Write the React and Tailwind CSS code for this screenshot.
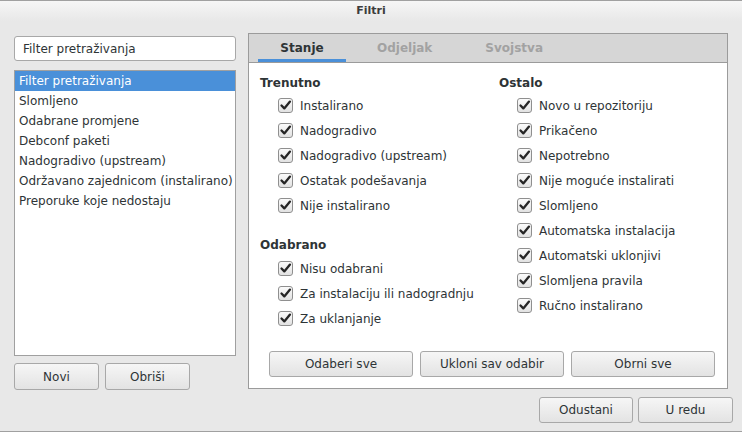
import React from "react";

const leftFilters = [
  "Filter pretraživanja",
  "Slomljeno",
  "Odabrane promjene",
  "Debconf paketi",
  "Nadogradivo (upstream)",
  "Održavano zajednicom (instalirano)",
  "Preporuke koje nedostaju",
];

const trenutno = ["Instalirano", "Nadogradivo", "Nadogradivo (upstream)", "Ostatak podešavanja", "Nije instalirano"];
const odabrano = ["Nisu odabrani", "Za instalaciju ili nadogradnju", "Za uklanjanje"];
const ostalo = [
  "Novo u repozitoriju",
  "Prikačeno",
  "Nepotrebno",
  "Nije moguće instalirati",
  "Slomljeno",
  "Automatska instalacija",
  "Automatski uklonjivi",
  "Slomljena pravila",
  "Ručno instalirano",
];

const Button = ({ children, className = "" }) => (
  <button
    className={`flex items-center justify-center rounded-[3px] border border-[#a8a8a8] bg-gradient-to-b from-[#f6f6f6] to-[#e3e3e3] text-[12px] text-[#2e3436] ${className}`}
  >
    {children}
  </button>
);

const Check = ({ label }) => (
  <div className="flex h-[25px] items-center whitespace-nowrap pl-[18px]">
    <div className="flex h-[15px] w-[15px] items-center justify-center rounded-[3px] border border-[#8f8f8f] bg-gradient-to-b from-[#fbfbfb] to-[#e2e2e2]">
      <svg width="13" height="13" viewBox="0 0 13 13">
        <path d="M2.5 6.5 L5.3 9.4 L11 2.6" fill="none" stroke="#262626" strokeWidth="2.3" strokeLinecap="round" strokeLinejoin="round" />
      </svg>
    </div>
    <span className="ml-[7px]">{label}</span>
  </div>
);

const Heading = ({ children, className = "h-[22px]" }) => (
  <div className={`flex items-center pt-[2px] font-bold ${className}`}>{children}</div>
);

export default function App() {
  return (
    <div className="flex h-[432px] w-[742px] flex-col overflow-hidden border-y border-[#a0a0a0] bg-[#e8e8e8] font-['DejaVu_Sans',sans-serif] text-[12px] text-[#2e3436]">
      <div className="flex h-[20px] items-center justify-center bg-gradient-to-b from-[#f6f6f6] to-[#e8e8e8] text-[11px] font-bold text-[#3c3c3c]">
        Filtri
      </div>

      <div className="flex px-[14px] pt-[12px]">
        <div className="flex w-[222px] flex-col pt-[3px]">
          <div className="flex h-[25px] items-center rounded-[3px] border border-[#a8a8a8] bg-white pl-[8px]">
            Filter pretraživanja
          </div>
          <div className="mt-[9px] h-[286px] border border-[#a0a0a0] bg-white">
            {leftFilters.map((f, i) => (
              <div
                key={f}
                className={`flex h-[20px] items-center whitespace-nowrap pl-[4px] ${i === 0 ? "bg-[#4a90d9] text-white" : ""}`}
              >
                {f}
              </div>
            ))}
          </div>
          <div className="mt-[7px] flex gap-[6px]">
            <Button className="h-[27px] w-[85px]">Novi</Button>
            <Button className="h-[27px] w-[85px]">Obriši</Button>
          </div>
        </div>

        <div className="ml-[12px] flex h-[356px] w-[480px] flex-col border border-[#9b9b9b] bg-white">
          <div className="flex h-[29px] gap-[9px] border-b border-[#9b9b9b] bg-[#d6d6d6] pl-[9px] text-[12px] font-bold">
            <div className="flex w-[88px] items-center justify-center border-b-[3px] border-[#4a90d9] pt-[2px]">Stanje</div>
            <div className="flex items-center px-[22px] pb-[1px] text-[#a2a2a2]">Odjeljak</div>
            <div className="flex items-center px-[22px] pb-[1px] text-[#a2a2a2]">Svojstva</div>
          </div>

          <div className="flex flex-1 flex-col pt-[8px]">
            <div className="flex">
              <div className="w-[250px] pl-[11px]">
                <Heading>Trenutno</Heading>
                {trenutno.map((t) => (
                  <Check key={t} label={t} />
                ))}
                <div className="mt-[14px]">
                  <Heading className="h-[24px]">Odabrano</Heading>
                  {odabrano.map((t) => (
                    <Check key={t} label={t} />
                  ))}
                </div>
              </div>
              <div>
                <Heading>Ostalo</Heading>
                {ostalo.map((t) => (
                  <Check key={t} label={t} />
                ))}
              </div>
            </div>

            <div className="mt-auto flex gap-[7px] pb-[11px] pl-[20px]">
              <Button className="h-[26px] w-[144px]">Odaberi sve</Button>
              <Button className="h-[26px] w-[144px]">Ukloni sav odabir</Button>
              <Button className="h-[26px] w-[144px]">Obrni sve</Button>
            </div>
          </div>
        </div>
      </div>

      <div className="mt-[7px] flex justify-end gap-[5px] pr-[9px]">
        <Button className="h-[26px] w-[94px]">Odustani</Button>
        <Button className="h-[26px] w-[95px]">U redu</Button>
      </div>
    </div>
  );
}
